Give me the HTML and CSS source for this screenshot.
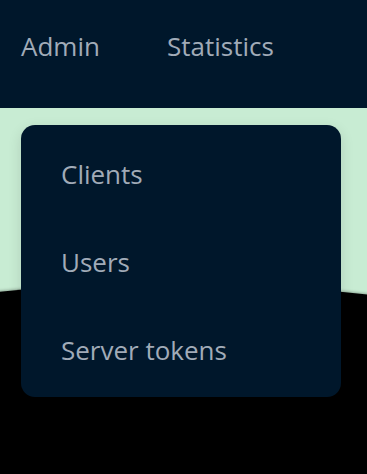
FILE: index.html
```html
<!DOCTYPE html>
<html lang="en">
<head>
<meta charset="UTF-8" />
<meta name="viewport" content="width=device-width, initial-scale=1" />
<title>Admin</title>
<link rel="stylesheet" href="styles.css">
</head>
<body>

<nav class="topbar">
  <a class="nav-link" href="#">Admin</a>
  <a class="nav-link" href="#">Statistics</a>
</nav>

<main class="page">
  <div class="hero"></div>
  <div class="ground"></div>

  <ul class="dropdown">
    <li><a href="#">Clients</a></li>
    <li><a href="#">Users</a></li>
    <li><a href="#">Server tokens</a></li>
  </ul>
</main>

</body>
</html>
```

FILE: styles.css
```css
body {
  margin: 0;
  font-family: "Open Sans", sans-serif;
  background: #000;
  overflow: hidden;
  height: 474px;
}

.topbar {
  display: flex;
  gap: 67px;
  align-items: center;
  height: 108px;
  padding: 0 21px 16px;
  box-sizing: border-box;
  background: #00172b;
}

.nav-link {
  color: #a1abb8;
  text-decoration: none;
  font-size: 26px;
}

.page {
  position: relative;
  height: 366px;
  overflow: hidden;
  background: #c8ecd3;
}

.hero {
  height: 176px;
}

.ground {
  background: #000;
  height: 220px;
  margin: 0 -123px 0 -150px;
  border-radius: 50% 50% 0 0 / 50px 50px 0 0;
  box-shadow: 0 -1px 3px rgba(0, 0, 0, 0.3);
}

/* menu floats over the hero */
.dropdown {
  position: absolute;
  top: 17px;
  left: 21px;
  width: 320px;
  margin: 0;
  padding: 4px 0;
  list-style: none;
  background: #00172b;
  border-radius: 14px;
  box-sizing: border-box;
  box-shadow: 0 4px 14px rgba(0, 0, 0, 0.12);
}

.dropdown li a {
  display: block;
  padding: 0 40px;
  height: 88px;
  line-height: 90px;
  color: #a1abb8;
  text-decoration: none;
  font-size: 26px;
}
```
